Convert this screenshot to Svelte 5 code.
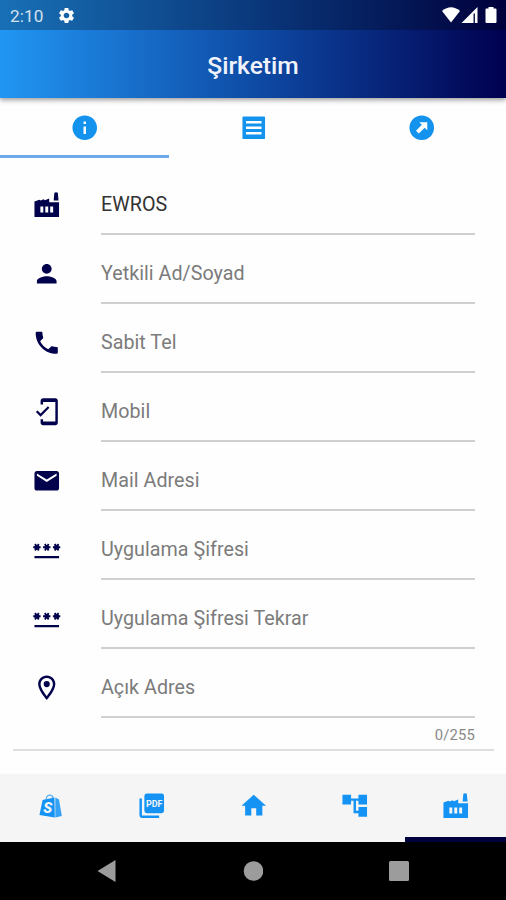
<script>
  const icons = {
    factory: 'M22 9.9V22H2V9.4L6 8l1.2.6L9.300 7.500l1.200.9L14 7v2.900zM17.600 8.600L18.200 2.300Q19.600 1.500 21 2.300l.6 6.300zM10.800 18.300h2.400v-4.800h-2.400zM6.800 18.300h2.400v-4.800H6.800zM14.800 18.300h2.400v-4.800h-2.400z',
    person: 'M12 12c2.21 0 4-1.79 4-4s-1.79-4-4-4-4 1.79-4 4 1.79 4 4 4zm0 2c-2.67 0-8 1.34-8 4v2h16v-2c0-2.66-5.33-4-8-4z',
    phone: 'M6.62 10.79c1.44 2.83 3.76 5.14 6.59 6.59l2.2-2.2c.27-.27.67-.36 1.02-.24 1.12.37 2.33.57 3.57.57.55 0 1 .45 1 1V20c0 .55-.45 1-1 1-9.39 0-17-7.61-17-17 0-.55.45-1 1-1h3.5c.55 0 1 .45 1 1 0 1.25.2 2.45.57 3.57.11.35.03.74-.25 1.02l-2.2 2.2z',
    mobile: 'M19 1H9c-1.1 0-2 .9-2 2v3h2V4h10v16H9v-2H7v3c0 1.1.9 2 2 2h10c1.1 0 2-.9 2-2V3c0-1.1-.9-2-2-2zM7.01 13.47l-2.55-2.55-1.27 1.27L7 16l7.19-7.19-1.27-1.27z',
    mail: 'M20 4H4c-1.1 0-1.99.9-1.99 2L2 18c0 1.1.9 2 2 2h16c1.1 0 2-.9 2-2V6c0-1.1-.9-2-2-2zm0 4l-8 5-8-5V6l8 5 8-5v2z',
    password: 'M2 17h20v2H2v-2zm1.15-4.05L4 11.47l.85 1.48 1.3-.75-.85-1.48H7v-1.5H5.3l.85-1.47L4.85 7 4 8.47 3.15 7l-1.3.75.85 1.47H1v1.5h1.7l-.85 1.48 1.3.75zm6.7-.75l1.3.75.85-1.48.85 1.48 1.3-.75-.85-1.48H15v-1.5h-1.7l.85-1.47-1.3-.75L12 8.47 11.15 7l-1.3.75.85 1.47H9v1.5h1.7l-.85 1.48zM23 9.22h-1.7l.85-1.47-1.3-.75L20 8.47 19.15 7l-1.3.75.85 1.47H17v1.5h1.7l-.85 1.48 1.3.75.85-1.48.85 1.48 1.3-.75-.85-1.48H23v-1.5z',
    place: 'M12 2C8.13 2 5 5.13 5 9c0 5.25 7 13 7 13s7-7.75 7-13c0-3.87-3.13-7-7-7zM7 9c0-2.76 2.24-5 5-5s5 2.24 5 5c0 2.88-2.88 7.19-5 9.88C9.92 16.21 7 11.85 7 9zM12 6.5a2.5 2.5 0 1 0 0 5 2.5 2.5 0 0 0 0-5z',
    info: 'M12 2C6.48 2 2 6.48 2 12s4.48 10 10 10 10-4.48 10-10S17.52 2 12 2zm1 15h-2v-6h2v6zm0-8h-2V7h2v2z',
    list: 'M3.500 2.800h17q.7 0 .7.7v17q0 .7-.7.7h-17q-.7 0-.7-.7v-17q0-.7.7-.7zM5.700 6.500v2.100h12.600V6.500zM5.700 10.900V13h12.600v-2.100zM5.700 15.400v2.100h12.600v-2.100z',
    arrow: 'M12 2a10 10 0 1 0 0 20 10 10 0 0 0 0-20zM10 7.5h6.5V14l-2.1-2.1-4.8 4.8-2.3-2.3 4.8-4.8z',
    home: 'M10 20v-6h4v6h5v-8h3L12 3 2 12h3v8z',
    tree: 'M22 11V3h-7v3H9V3H2v8h7V8h2v10h4v3h7v-8h-7v3h-2V8h2v3z',
    gear: 'M19.14 12.94c.04-.3.06-.61.06-.94 0-.32-.02-.64-.07-.94l2.03-1.58c.18-.14.23-.41.12-.61l-1.92-3.32c-.12-.22-.37-.29-.59-.22l-2.39.96c-.5-.38-1.03-.7-1.62-.94l-.36-2.54c-.04-.24-.24-.41-.48-.41h-3.84c-.24 0-.43.17-.47.41l-.36 2.54c-.59.24-1.13.57-1.62.94l-2.39-.96c-.22-.08-.47 0-.59.22L2.74 8.87c-.12.21-.08.47.12.61l2.03 1.58c-.05.3-.09.63-.09.94s.02.64.07.94l-2.03 1.58c-.18.14-.23.41-.12.61l1.92 3.32c.12.22.37.29.59.22l2.39-.96c.5.38 1.03.7 1.62.94l.36 2.54c.05.24.24.41.48.41h3.84c.24 0 .44-.17.47-.41l.36-2.54c.59-.24 1.13-.56 1.62-.94l2.39.96c.22.08.47 0 .59-.22l1.92-3.32c.12-.22.07-.47-.12-.61l-2.01-1.58zM12 15.6c-1.98 0-3.6-1.62-3.6-3.6s1.62-3.6 3.6-3.6 3.6 1.62 3.6 3.6-1.62 3.6-3.6 3.6z'
  };
  const fields = [
    { icon: 'factory', text: 'EWROS', filled: true },
    { icon: 'person', text: 'Yetkili Ad/Soyad' },
    { icon: 'phone', text: 'Sabit Tel' },
    { icon: 'mobile', text: 'Mobil' },
    { icon: 'mail', text: 'Mail Adresi' },
    { icon: 'password', text: 'Uygulama Şifresi' },
    { icon: 'password', text: 'Uygulama Şifresi Tekrar' },
    { icon: 'place', text: 'Açık Adres' }
  ];
  const tabs = ['info', 'list', 'arrow'];
  const nav = ['shop', 'pdf', 'home', 'tree', 'factory'];
</script>

{#snippet icon(name)}
  <svg class="icon" viewBox="0 0 24 24" fill="currentColor">
    {#if name === 'pdf'}
      <path d="M8 2h12a2 2 0 0 1 2 2v12a2 2 0 0 1-2 2H8a2 2 0 0 1-2-2V4a2 2 0 0 1 2-2zM4 6H2v14a2 2 0 0 0 2 2h14v-2H4z" />
      <text x="14" y="12.700" class="pdf" textLength="13.400" lengthAdjust="spacingAndGlyphs">PDF</text>
    {:else if name === 'shop'}
      <path d="M5.400 7.300L15 5.200l.3 16.300L2.800 19.600z" />
      <path d="M15.700 5.300l3 1.600 2.300 13.400-5.300 1.200z" opacity="0.85" />
      <path d="M8 7.200c.5-2.400 2-4 3.600-3.800 1.500.2 2.300 1.400 2.500 3" fill="none" stroke="currentColor" stroke-width="1" opacity="0.7" />
      <text x="9.600" y="18" class="s">S</text>
    {:else}
      <path fill-rule="evenodd" d={icons[name]} />
      {#if name === 'password'}
        <circle cx="4" cy="9.970" r="2.100" />
        <circle cx="12" cy="9.970" r="1.900" />
        <circle cx="20" cy="9.970" r="2.100" />
      {/if}
    {/if}
  </svg>
{/snippet}

<div class="screen">
  <header>
    <div class="status">
      <span class="time">2:10</span>
      <svg class="gear" viewBox="0 0 24 24"><path fill="#fff" d={icons.gear} /></svg>
      <svg class="signals" viewBox="0 0 56 20" fill="#fff">
        <path d="M0 5Q9-2.5 18 5L9 16.5z" />
        <path d="M19.500 17L35.500 1v16z" />
        <path d="M31.500 7.500h1.500V17h-1.500z" fill="#17204f" />
        <path d="M46.500 1h5v1.500h2q1 0 1 1V16q0 1-1 1h-9q-1 0-1-1V3.500q0-1 1-1h2z" />
      </svg>
    </div>
    <h1>Şirketim</h1>
  </header>

  <div class="tabs">
    {#each tabs as name, i}
      <div class="tab" class:active={i === 0}>{@render icon(name)}</div>
    {/each}
  </div>

  <main>
    {#each fields as field}
      <div class="row">
        <div class="lead">{@render icon(field.icon)}</div>
        <div class="field" class:filled={field.filled}>{field.text}</div>
      </div>
    {/each}
    <div class="counter">0/255</div>
  </main>

  <nav>
    {#each nav as name, i}
      <div class="item" class:current={i === 4}>{@render icon(name)}</div>
    {/each}
  </nav>

  <div class="system">
    <svg viewBox="0 0 20 22"><path d="M18.500 0v22L.5 11z" /></svg>
    <svg viewBox="0 0 20 22"><circle cx="10.500" cy="11" r="9.800" /></svg>
    <svg viewBox="0 0 20 22"><rect x="0" y="1" width="20" height="20" rx="1.500" /></svg>
  </div>
</div>

<style>
  .screen {
    width: 506px;
    height: 900px;
    display: flex;
    flex-direction: column;
    background: #fefefe;
    font-family: Roboto, sans-serif;
    overflow: hidden;
  }
  .icon {
    display: block;
    width: 29.5px;
    height: 29.5px;
  }
  header {
    height: 98px;
    flex: none;
    background: linear-gradient(90deg, #2196f3 0%, #0d47a1 53%, #00004f 100%);
    box-shadow: 0 2px 5px rgba(0, 0, 0, 0.4);
    z-index: 1;
  }
  .status {
    box-sizing: border-box;
    height: 30px;
    padding: 0 8px 0 10px;
    display: flex;
    align-items: center;
    background: rgba(0, 0, 0, 0.25);
  }
  .time {
    width: 47px;
    padding-top: 1px;
    font-size: 17.2px;
    letter-spacing: 0.1px;
    color: #d5e2ee;
  }
  .gear {
    width: 19px;
    height: 19px;
  }
  .signals {
    width: 56px;
    height: 20px;
    margin-left: auto;
    margin-top: 1px;
  }
  h1 {
    margin: 0;
    height: 70px;
    line-height: 71px;
    text-align: center;
    font-size: 24.6px;
    font-weight: 500;
    color: #f1f3fb;
  }
  .tabs {
    height: 60px;
    flex: none;
    display: flex;
    color: #1493ee;
  }
  .tab {
    flex: 1;
    display: flex;
    justify-content: center;
    padding: 14.5px 0 0 0.5px;
    box-sizing: border-box;
  }
  .active {
    border-bottom: 3px solid #6caaeb;
  }
  main {
    height: 593px;
    flex: none;
    box-sizing: border-box;
    margin: 0 12px 0 13px;
    padding: 8px 19px 0 0;
    border-bottom: 2px solid #dedede;
  }
  .row {
    height: 69px;
    display: flex;
  }
  .lead {
    width: 88px;
    box-sizing: border-box;
    padding: 24px 0 0 19.3px;
    color: #02024c;
  }
  .field {
    flex: 1;
    box-sizing: border-box;
    height: 69px;
    line-height: 78px;
    border-bottom: 2px solid #cfcfcf;
    font-size: 19.7px;
    letter-spacing: 0.03px;
    color: #7b7b7b;
  }
  .filled {
    color: #333;
  }
  .counter {
    margin-top: 7px;
    text-align: right;
    font-size: 14.8px;
    letter-spacing: 0.2px;
    line-height: 20px;
    color: #888;
  }
  nav {
    margin-top: 23px;
    height: 68px;
    flex: none;
    display: flex;
    background: #f5f5f5;
    color: #1493f5;
  }
  .item {
    flex: 1;
    box-sizing: border-box;
    display: flex;
    justify-content: center;
    padding: 16.5px 0 0 0.8px;
  }
  .current {
    border-bottom: 5px solid #00003c;
  }
  .pdf {
    font: 700 7.5px Roboto, sans-serif;
    text-anchor: middle;
    fill: #f5f5f5;
  }
  .s {
    font: italic 900 12px Roboto, sans-serif;
    text-anchor: middle;
    fill: #f5f5f5;
  }
  .system {
    flex: 1;
    display: flex;
    align-items: center;
    justify-content: center;
    gap: 126px;
    background: #000;
  }
  .system svg {
    width: 20px;
    height: 22px;
    fill: #9c9c9c;
  }
</style>
